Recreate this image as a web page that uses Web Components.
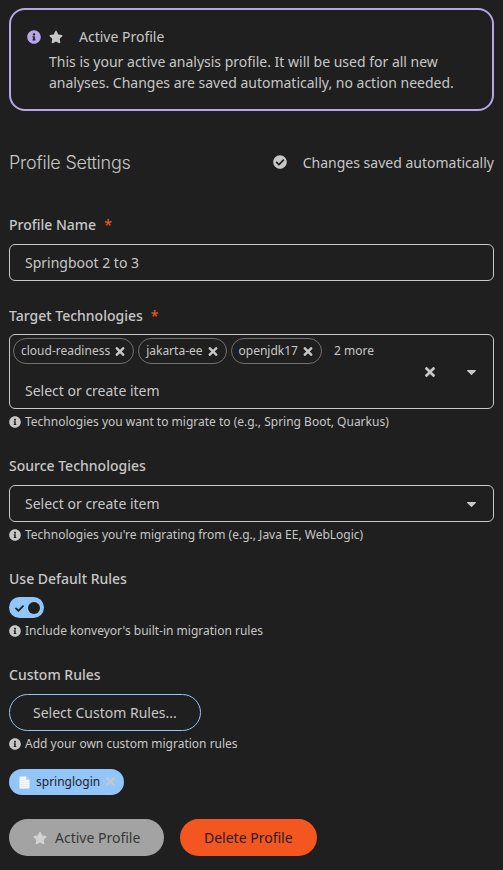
<!DOCTYPE html>
<html lang="en">
<head>
<meta charset="utf-8">
<title>Profile Settings</title>
<style>
html{background:#1f1f1f}
body{margin:0;background:#1f1f1f;color:#c7c7c7;font:14px/21px "Noto Sans",sans-serif;height:870px;overflow:hidden}
</style>
</head>
<body>
<profile-page></profile-page>
<script>
const define = (name, css, html) => customElements.define(name, class extends HTMLElement {
  connectedCallback() {
    if (this.shadowRoot) return;
    const root = this.attachShadow({ mode: 'open' });
    const markup = typeof html === 'function' ? html(this) : html;
    root.innerHTML = `<style>*{box-sizing:border-box}${css}</style>${markup}`;
  }
});

const icons = {
  info: ['0 0 512 512', 'M256 8C119 8 8 119 8 256s111 248 248 248 248-111 248-248S393 8 256 8zm0 110c23.200 0 42 18.800 42 42s-18.800 42-42 42-42-18.800-42-42 18.800-42 42-42zm56 254c0 6.600-5.400 12-12 12h-88c-6.600 0-12-5.400-12-12v-24c0-6.600 5.400-12 12-12h12v-64h-12c-6.600 0-12-5.400-12-12v-24c0-6.600 5.400-12 12-12h64c6.600 0 12 5.400 12 12v100h12c6.600 0 12 5.400 12 12v24z'],
  star: ['0 0 576 512', 'M259.300 17.800L194 150.200 47.900 171.500c-26.200 3.800-36.700 36.100-17.700 54.600l105.700 103-25 145.500c-4.500 26.300 23.200 46 46.400 33.700L288 439.600l130.700 68.700c23.200 12.200 50.900-7.400 46.400-33.700l-25-145.500 105.700-103c19-18.500 8.500-50.800-17.700-54.600L382 150.200 316.700 17.800c-11.700-23.600-45.600-23.900-57.400 0z'],
  checked: ['0 0 512 512', 'M504 256c0 137-111 248-248 248S8 393 8 256 119 8 256 8s248 111 248 248zM227.300 387.300l184-184c6.200-6.200 6.200-16.400 0-22.600l-22.600-22.600c-6.200-6.200-16.400-6.200-22.600 0L216 308.100l-70.100-70.100c-6.200-6.200-16.400-6.200-22.600 0l-22.600 22.600c-6.200 6.200-6.200 16.400 0 22.600l104 104c6.200 6.300 16.400 6.300 22.600.1z'],
  check: ['0 0 512 512', 'M173.900 439.400L7.500 273c-10-10-10-26.200 0-36.200l36.200-36.200c10-10 26.200-10 36.200 0L192 312.700 432.100 72.600c10-10 26.200-10 36.200 0l36.200 36.200c10 10 10 26.200 0 36.200L210.100 439.400c-10 10-26.200 10-36.200 0z'],
  times: ['0 80 352 352', 'M242.700 256l100.100-100.100c12.300-12.300 12.300-32.200 0-44.500l-22.200-22.200c-12.300-12.300-32.200-12.300-44.500 0L176 189.300 75.900 89.200c-12.300-12.300-32.200-12.300-44.500 0L9.200 111.500c-12.300 12.300-12.300 32.200 0 44.500L109.300 256 9.200 356.100c-12.300 12.300-12.300 32.200 0 44.500l22.200 22.200c12.300 12.300 32.200 12.300 44.500 0L176 322.700l100.100 100.100c12.300 12.300 32.200 12.300 44.500 0l22.200-22.200c12.300-12.300 12.300-32.200 0-44.500L242.700 256z'],
  caret: ['12 192 296 168', 'M31.300 192h257.300c17.800 0 26.700 21.500 14.100 34.100L174.100 354.800c-7.800 7.800-20.500 7.800-28.300 0L17.200 226.100C4.600 213.500 13.500 192 31.300 192z']
};
define('ui-icon', ':host{display:inline-flex;flex:none;width:14px;height:14px}svg{width:100%;height:100%;display:block;overflow:visible}', el => {
  const [box, path] = icons[el.getAttribute('name')];
  return `<svg viewBox="${box}" fill="currentColor"><path d="${path}"/></svg>`;
});

define('file-icon', ':host{display:block;flex:none;width:11px;height:13px}svg{display:block}', `
<svg width="11" height="13" viewBox="0 0 11 13"><path d="M.5.500h6.700l3.300 3.300v8.700H.5z" fill="#f7f9fa"/><path d="M7.200.5v3.300h3.300z" fill="#b8c9d4"/><path d="M2 4.500h4M2 6.500h7M2 8.500h7M2 10.500h7" stroke="#dde3e6" stroke-width=".7"/></svg>`);

define('profile-alert', `
:host{display:block;box-sizing:border-box;height:103px;border:2px solid #b6a6e9;border-radius:16px;padding:16px}
.title{display:flex;align-items:center;height:21px;font-weight:400}
.info{color:#b6a6e9;margin-right:8px}.star{margin-right:16px}
.body{padding:4px 0 0 22px}`, `
<div class="title"><ui-icon class="info" name="info"></ui-icon><ui-icon class="star" name="star"></ui-icon><slot name="title"></slot></div>
<div class="body"><slot></slot></div>`);

define('settings-header', `
:host{display:flex;justify-content:space-between;align-items:center;height:24px;margin-top:40px}
.h{font:300 18px/24px Inter,sans-serif;letter-spacing:-.23px}
.s{display:flex;align-items:center;height:21px;margin-bottom:2px}ui-icon{margin:-1px 16px 0 0}`, `
<div class="h"><slot></slot></div><div class="s"><ui-icon name="checked"></ui-icon><slot name="status"></slot></div>`);

define('form-field', `
:host{display:block}
.label{font-weight:500;height:21px;margin-bottom:9px}
:host([tight]) .label{margin-bottom:8px}
.req{color:#f0561d;margin-left:8px}
.help{display:flex;align-items:center;gap:4px;font-size:12px;line-height:18px;height:18px;margin-top:4px}
.help ui-icon{width:12px;height:12px}`, el => `
<div class="label">${el.getAttribute('label')}${el.hasAttribute('required') ? '<span class="req">*</span>' : ''}</div>
<slot></slot>${el.hasAttribute('help') ? `<div class="help"><ui-icon name="info"></ui-icon><span>${el.getAttribute('help')}</span></div>` : ''}`);

define('field-box', `
:host{display:flex;box-sizing:border-box;height:37px;border:1px solid #c7c7c7;border-radius:6px;padding:0 17px 0 15px;align-items:center;justify-content:space-between}
ui-icon{width:9px;height:5px;margin-top:1px}`, el => `<span><slot></slot></span>${el.hasAttribute('caret') ? '<ui-icon name="caret"></ui-icon>' : ''}`);

define('tag-chip', `
:host{display:inline-flex;box-sizing:border-box;height:26px;border:1px solid #707070;border-radius:13px;padding:0 8px 0 7px;align-items:center;gap:5px;font-size:12px;line-height:18px}
ui-icon{width:10px;height:9px}`, `<slot></slot><ui-icon name="times"></ui-icon>`);

define('multi-select', `
:host{display:flex;box-sizing:border-box;height:75px;border:1px solid #c7c7c7;border-radius:6px;padding:3px 17px 0 3px;justify-content:space-between}
.chips{display:flex;gap:4px;height:26px;align-items:center}
.more{font-size:12px;line-height:18px;margin-left:8px}
.ph{padding:16px 0 0 12px}
.act{display:flex;align-items:center;gap:32px;height:68px}
.clear{width:10px;height:10px}.caret{width:9px;height:5px}`, `
<div><div class="chips"><slot></slot><span class="more"><slot name="more"></slot></span></div><div class="ph"><slot name="placeholder"></slot></div></div>
<div class="act"><ui-icon class="clear" name="times"></ui-icon><ui-icon class="caret" name="caret"></ui-icon></div>`);

define('toggle-switch', `
:host{display:flex;box-sizing:border-box;width:35px;height:21px;border-radius:11px;background:#92c5f9;color:#1f1f1f;align-items:center;justify-content:space-between;padding:0 4px 0 6px}
ui-icon{width:9px;height:9px;margin-top:1px}.knob{width:12px;height:12px;border-radius:50%;background:#1f1f1f}`, `<ui-icon name="check"></ui-icon><span class="knob"></span>`);

define('pill-button', `
:host{display:inline-flex;box-sizing:border-box;height:37px;border-radius:19px;padding:0 24px;align-items:center;white-space:nowrap}
:host([kind=outline]){display:flex;width:192px;border:1px solid #92c5f9;padding:0 23px}
:host([kind=disabled]){width:155px;background:#a3a3a3;color:#383838}
:host([kind=danger]){width:137px;background:#f4561f;color:#1f1f1f}
ui-icon{color:#d2d2d2;margin-right:8px}`, el => `${el.hasAttribute('icon') ? `<ui-icon name="${el.getAttribute('icon')}"></ui-icon>` : ''}<slot></slot>`);

define('rule-label', `
:host{display:flex;box-sizing:border-box;width:115px;height:26px;border-radius:13px;background:#92c5f9;color:#1f1f1f;padding:0 9px 0 10px;align-items:center;font-size:12px;line-height:18px}
file-icon{margin-right:6px}ui-icon{width:9px;height:9px;color:#c7c7c7;margin:-1px 0 0 auto}`, `<file-icon></file-icon><slot></slot><ui-icon name="times"></ui-icon>`);

define('profile-page', `
:host{display:flex;flex-direction:column;padding:8px 9px 0}
.name{margin-top:39px}
.target,.source,.default,.custom{margin-top:24px}
rule-label{margin-top:16px}.buttons{display:flex;gap:16px;margin-top:24px}`, `
<profile-alert><span slot="title">Active Profile</span>This is your active analysis profile. It will be used for all new analyses. Changes are saved automatically, no action needed.</profile-alert>
<settings-header>Profile Settings<span slot="status">Changes saved automatically</span></settings-header>
<form-field class="name" label="Profile Name" required><field-box>Springboot 2 to 3</field-box></form-field>
<form-field class="target" tight label="Target Technologies" required help="Technologies you want to migrate to (e.g., Spring Boot, Quarkus)">
<multi-select><tag-chip>cloud-readiness</tag-chip><tag-chip>jakarta-ee</tag-chip><tag-chip>openjdk17</tag-chip><span slot="more">2 more</span><span slot="placeholder">Select or create item</span></multi-select></form-field>
<form-field class="source" label="Source Technologies" help="Technologies you're migrating from (e.g., Java EE, WebLogic)"><field-box caret>Select or create item</field-box></form-field>
<form-field class="default" tight label="Use Default Rules" help="Include konveyor's built-in migration rules"><toggle-switch></toggle-switch></form-field>
<form-field class="custom" label="Custom Rules" help="Add your own custom migration rules"><pill-button kind="outline">Select Custom Rules...</pill-button></form-field>
<rule-label>springlogin</rule-label>
<div class="buttons"><pill-button kind="disabled" icon="star">Active Profile</pill-button><pill-button kind="danger">Delete Profile</pill-button></div>`);
</script>
</body>
</html>
